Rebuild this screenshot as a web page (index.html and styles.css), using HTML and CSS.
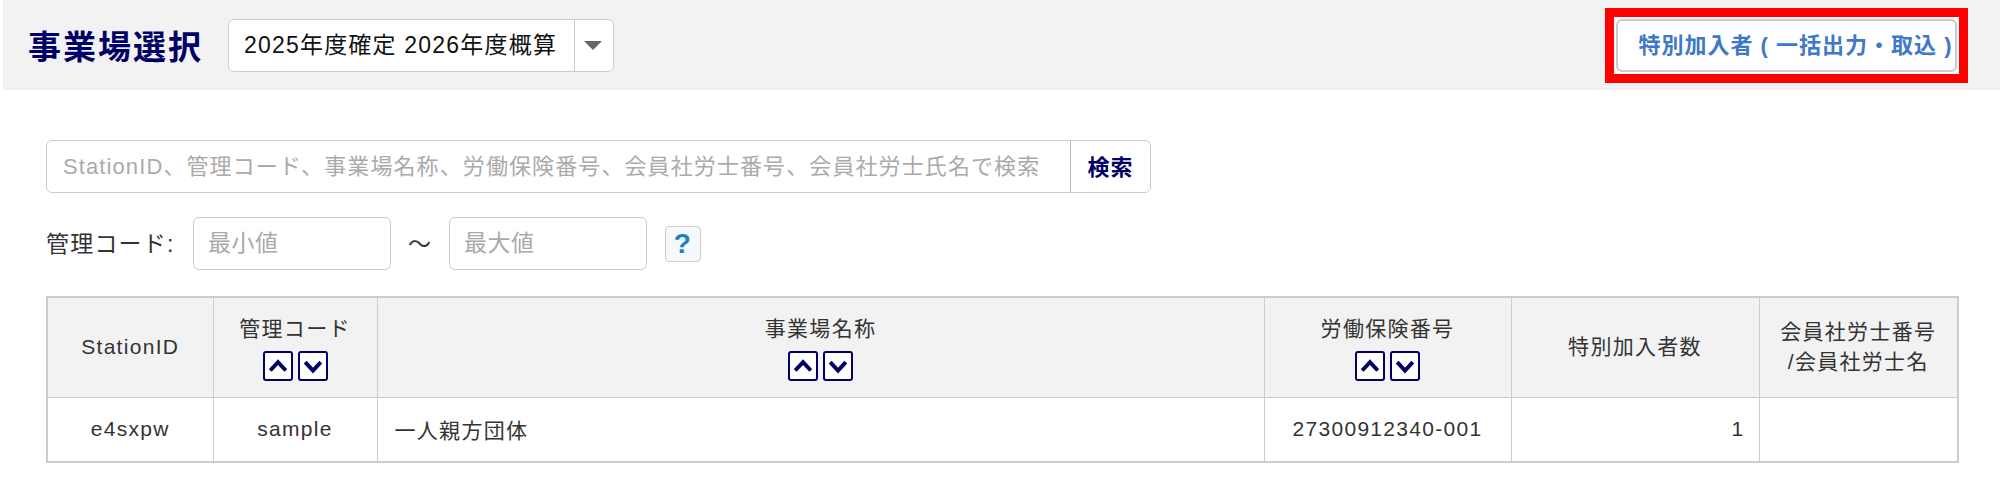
FILE: index.html
```html
<!DOCTYPE html>
<html lang="ja">
<head>
<meta charset="utf-8">
<title>事業場選択</title>
<link rel="stylesheet" href="styles.css">
</head>
<body>

<header class="topbar">
  <div class="topbar-left">
    <h1 class="title">事業場選択</h1>
    <div class="yearselect">
      <span class="yearselect-text">2025年度確定 2026年度概算</span>
      <span class="yearselect-arrow"><span class="caret"></span></span>
    </div>
  </div>
  <div class="highlight">
    <button class="bulkbtn">特別加入者 ( 一括出力・取込 )</button>
  </div>
</header>

<main class="content">
  <div class="searchbox">
    <input class="searchbox-input" placeholder="StationID、管理コード、事業場名称、労働保険番号、会員社労士番号、会員社労士氏名で検索">
    <button class="searchbox-btn">検索</button>
  </div>

  <div class="rangerow">
    <label class="rangerow-label">管理コード:</label>
    <input class="rangeinput" placeholder="最小値">
    <span class="tilde">～</span>
    <input class="rangeinput" placeholder="最大値">
    <button class="helpbtn">?</button>
  </div>

  <table class="list">
    <colgroup>
      <col class="c-id"><col class="c-code"><col class="c-name"><col class="c-no"><col class="c-count"><col class="c-sr">
    </colgroup>
    <thead>
      <tr>
        <th>StationID</th>
        <th>管理コード
          <div class="sorts">
            <span class="sortbtn"><svg viewBox="0 0 20 20"><path d="M4 13.5 10 7l6 6.5"/></svg></span>
            <span class="sortbtn"><svg viewBox="0 0 20 20"><path d="M4 7l6 6.5L16 7"/></svg></span>
          </div>
        </th>
        <th>事業場名称
          <div class="sorts">
            <span class="sortbtn"><svg viewBox="0 0 20 20"><path d="M4 13.5 10 7l6 6.5"/></svg></span>
            <span class="sortbtn"><svg viewBox="0 0 20 20"><path d="M4 7l6 6.5L16 7"/></svg></span>
          </div>
        </th>
        <th>労働保険番号
          <div class="sorts">
            <span class="sortbtn"><svg viewBox="0 0 20 20"><path d="M4 13.5 10 7l6 6.5"/></svg></span>
            <span class="sortbtn"><svg viewBox="0 0 20 20"><path d="M4 7l6 6.5L16 7"/></svg></span>
          </div>
        </th>
        <th>特別加入者数</th>
        <th>会員社労士番号<br>/会員社労士名</th>
      </tr>
    </thead>
    <tbody>
      <tr>
        <td class="center">e4sxpw</td>
        <td class="center">sample</td>
        <td class="name">一人親方団体</td>
        <td class="center">27300912340-001</td>
        <td class="right">1</td>
        <td></td>
      </tr>
    </tbody>
  </table>
</main>

</body>
</html>
```

FILE: styles.css
```css
* {
	box-sizing: border-box;
}
body {
	margin: 0;
	font-family: "Liberation Sans", "Noto Sans CJK JP", sans-serif;
	font-size: 21px;
	letter-spacing: 1.3px;
	color: #333;
	background: #fff;
}
input, button {
	font-family: inherit;
	letter-spacing: inherit;
}

/* top bar */
.topbar {
	display: flex;
	justify-content: space-between;
	align-items: center;
	height: 90px;
	margin-left: 3px;
	padding: 0 32px 0 25px;
	background: #f2f2f2;
}
.topbar-left {
	display: flex;
	align-items: center;
	gap: 25px;
}
.title {
	margin: 0;
	font-size: 33px;
	letter-spacing: 2px;
	font-weight: bold;
	color: #000066;
}
.yearselect {
	display: flex;
	width: 386px;
	height: 53px;
	background: #fff;
	border: 1px solid #ccc;
	border-radius: 6px;
	color: #111;
}
.yearselect-text {
	flex: 1;
	padding-left: 15px;
	line-height: 51px;
	font-size: 23px;
	letter-spacing: 1.2px;
	white-space: nowrap;
}
.yearselect-arrow {
	display: flex;
	align-items: center;
	justify-content: center;
	width: 39px;
	padding-right: 3px;
	border-left: 1px solid #ccc;
}
.caret {
	border-left: 9px solid transparent;
	border-right: 9px solid transparent;
	border-top: 9px solid #666;
}
.highlight {
	padding: 2px;
	border: 9px solid #ff0000;
	background: #fff;
}
.bulkbtn {
	display: block;
	width: 341px;
	height: 53px;
	padding: 0 0 5px 18px;
	background: #fff;
	border: 2px solid #ccc;
	border-radius: 6px;
	font-size: 22px;
	letter-spacing: 1px;
	font-weight: bold;
	color: #3d78c9;
	white-space: nowrap;
}

/* search */
.content {
	padding: 50px 42px 0 46px;
}
.searchbox {
	display: flex;
	width: 1105px;
	height: 53px;
	background: #fff;
	border: 1px solid #ccc;
	border-radius: 6px;
}
.searchbox-input {
	flex: 1;
	min-width: 0;
	padding: 0 16px;
	border: 0;
	border-radius: 6px;
	background: transparent;
	font-size: 22px;
	letter-spacing: 1.1px;
}
.searchbox-btn {
	width: 80px;
	padding: 0 0 4px;
	border: 0;
	border-left: 1px solid #bbb;
	background: transparent;
	font-size: 22px;
	letter-spacing: 1px;
	font-weight: bold;
	color: #000066;
}
::placeholder {
	color: #aaa;
	opacity: 1;
}

/* range */
.rangerow {
	display: flex;
	align-items: center;
	margin-top: 24px;
	height: 53px;
	font-size: 23px;
	letter-spacing: 1.2px;
}
.rangerow-label {
	width: 147px;
	padding-bottom: 3px;
	white-space: nowrap;
}
.rangeinput {
	width: 198px;
	height: 53px;
	padding: 0 14px;
	border: 1px solid #ccc;
	border-radius: 6px;
	font-size: 23px;
	letter-spacing: 0.5px;
}
.tilde {
	width: 58px;
	padding-bottom: 3px;
	text-align: center;
}
.helpbtn {
	width: 36px;
	height: 36px;
	margin-left: 18px;
	padding: 0;
	border: 1px solid #ccc;
	border-radius: 4px;
	background: #f5f9fc;
	font-size: 28px;
	font-weight: bold;
	color: #1e7fc4;
}

/* table */
.list {
	width: 1911px;
	height: 167px;
	margin-top: 26px;
	border-collapse: collapse;
	table-layout: fixed;
	border: 2px solid #ccc;
}
.c-id { width: 166px; }
.c-code { width: 164px; }
.c-name { width: 887px; }
.c-no { width: 247px; }
.c-count { width: 248px; }
.c-sr { width: 199px; }
.list th, .list td {
	border: 1px solid #ccc;
	padding: 0 12px;
	font-weight: normal;
}
.list th {
	height: 100px;
	background: #f2f2f2;
	line-height: 30px;
	text-align: center;
}
.list td.name { padding-left: 17px; }
.center { text-align: center; }
.right { text-align: right; padding-right: 14px !important; }
.sorts {
	display: flex;
	justify-content: center;
	gap: 5px;
	margin-top: 7px;
}
.sortbtn {
	display: block;
	width: 30px;
	height: 30px;
	background: #fff;
	border: 2px solid #000066;
	border-radius: 3px;
}
.sortbtn svg {
	display: block;
	width: 100%;
	height: 100%;
	fill: none;
	stroke: #000066;
	stroke-width: 3;
}
```
